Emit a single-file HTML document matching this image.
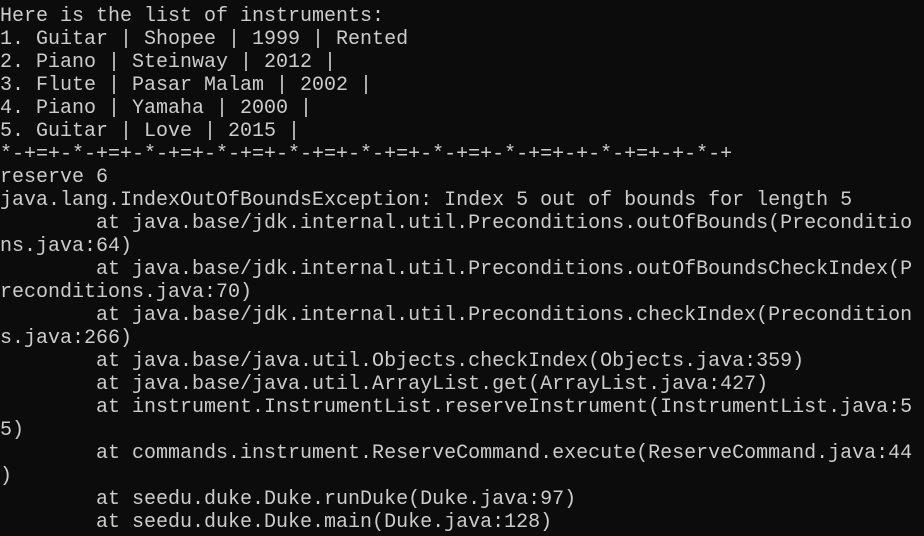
<!DOCTYPE html>
<html><head><style>
html,body{margin:0;background:#0c0c0c;width:924px;height:536px;overflow:hidden}
pre{margin:0;padding:5px 0 0 0;font-family:"Liberation Mono",monospace;font-size:20px;line-height:23px;color:#cccccc;white-space:pre}
</style></head><body><pre>Here is the list of instruments:
1. Guitar | Shopee | 1999 | Rented
2. Piano | Steinway | 2012 |
3. Flute | Pasar Malam | 2002 |
4. Piano | Yamaha | 2000 |
5. Guitar | Love | 2015 |
*-+=+-*-+=+-*-+=+-*-+=+-*-+=+-*-+=+-*-+=+-*-+=+-+-*-+=+-+-*-+
reserve 6
java.lang.IndexOutOfBoundsException: Index 5 out of bounds for length 5
        at java.base/jdk.internal.util.Preconditions.outOfBounds(Preconditio
ns.java:64)
        at java.base/jdk.internal.util.Preconditions.outOfBoundsCheckIndex(P
reconditions.java:70)
        at java.base/jdk.internal.util.Preconditions.checkIndex(Precondition
s.java:266)
        at java.base/java.util.Objects.checkIndex(Objects.java:359)
        at java.base/java.util.ArrayList.get(ArrayList.java:427)
        at instrument.InstrumentList.reserveInstrument(InstrumentList.java:5
5)
        at commands.instrument.ReserveCommand.execute(ReserveCommand.java:44
)
        at seedu.duke.Duke.runDuke(Duke.java:97)
        at seedu.duke.Duke.main(Duke.java:128)</pre></body></html>
